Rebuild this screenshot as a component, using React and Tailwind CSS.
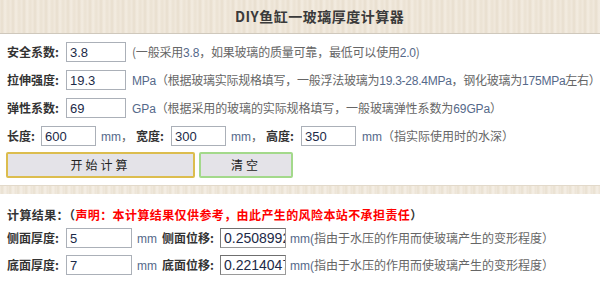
import React from 'react'

const cjk = "font-['Noto_Sans_CJK_SC','Liberation_Sans',sans-serif]"
const latin = "font-['Liberation_Sans','Noto_Sans_CJK_SC',sans-serif]"

// 输入框：浅灰蓝边框
function Field({ value, w = 'w-[60px]', dark = false }) {
  return (
    <input
      readOnly
      value={value}
      className={`${w} h-[20px] shrink-0 bg-white pl-[3px] pr-0 text-[#1c2a48] font-['Liberation_Sans',sans-serif] outline-none border ${
        dark ? 'text-[14px] border-[#9a9a9a] border-t-[#6f6f6f] border-l-[#7a7a7a]' : 'text-[13px] border-[#abb0b8]'
      }`}
    />
  )
}

function Label({ children, w }) {
  return <span className={`${w} shrink-0 text-[12px] font-bold text-[#333] ${cjk}`}>{children}</span>
}

const N = ({ children }) => <span className={`text-[#55698a] ${latin}`}>{children}</span>

export default function App() {
  return (
    <div className={`w-[600px] h-[285px] overflow-hidden bg-white text-[12px] text-[#666] ${cjk}`}>
      <div className="h-[34px] border-b border-[#cfc8bc] bg-[repeating-linear-gradient(90deg,#efe7da_0px,#e8dece_2px,#f3ece1_5px,#ebe2d3_8px,#f1e9dd_11px)] pl-[235px] pt-[6px]">
        <span className="text-[14px] font-bold text-[#3a3a3a] tracking-[0.5px]">DIY鱼缸一玻璃厚度计算器</span>
      </div>

      <div className="pl-[7px] pt-[8px]">
        <div className="flex h-[20px] items-center">
          <Label w="w-[59px]">安全系数:</Label>
          <Field value="3.8" />
          <span className="pl-[6px] whitespace-nowrap tracking-[-0.2px]">(一般采用<N>3.8</N>，如果玻璃的质量可靠，最低可以使用<N>2.0</N>)</span>
        </div>
        <div className="mt-[8px] flex h-[20px] items-center">
          <Label w="w-[59px]">拉伸强度:</Label>
          <Field value="19.3" />
          <span className="pl-[6px] whitespace-nowrap tracking-[-0.25px]"><N>MPa</N>（根据玻璃实际规格填写，一般浮法玻璃为<N>19.3-28.4MPa</N>，钢化玻璃为<N>175MPa</N>左右）</span>
        </div>
        <div className="mt-[8px] flex h-[20px] items-center">
          <Label w="w-[59px]">弹性系数:</Label>
          <Field value="69" />
          <span className="pl-[6px] whitespace-nowrap tracking-[-0.1px]"><N>GPa</N>（根据采用的玻璃的实际规格填写，一般玻璃弹性系数为<N>69GPa</N>）</span>
        </div>
        <div className="mt-[8px] flex h-[20px] items-center whitespace-nowrap">
          <Label w="w-[34px]">长度:</Label>
          <Field value="600" w="w-[55px]" />
          <span className="w-[40px] shrink-0 pl-[5px]"><N>mm</N>，</span>
          <Label w="w-[35px]">宽度:</Label>
          <Field value="300" w="w-[55px]" />
          <span className="w-[40px] shrink-0 pl-[5px]"><N>mm</N>，</span>
          <Label w="w-[35px]">高度:</Label>
          <Field value="350" w="w-[55px]" />
          <span className="pl-[6px]"><N>mm</N>（指实际使用时的水深）</span>
        </div>
        <div className="mt-[6px] flex h-[26px] gap-[4px]">
          <button className="ml-[-1px] w-[189px] rounded-[2px] border-2 border-[#dcbd4e] bg-[#e4e3e8] text-[12px] tracking-[3px] text-[#222]">
            开始计算
          </button>
          <button className="w-[94px] rounded-[2px] border-2 border-[#a3d98b] bg-[#e4e3e8] text-[12px] tracking-[3px] text-[#222]">
            清空
          </button>
        </div>
      </div>

      <div className="mt-[7px] h-[9px] border-t border-[#e2d9ca] bg-[repeating-linear-gradient(90deg,#f1eadf_0px,#e9e0d0_2px,#f5efe6_5px,#ece3d5_8px)]" />

      <div className="pl-[7px]">
        <div className="mt-[14px] flex h-[14px] items-center whitespace-nowrap font-bold tracking-[0.4px]">
          <span className="text-[#333]">计算结果：（</span>
          <span className="text-[#ff0000]">声明：本计算结果仅供参考，由此产生的风险本站不承担责任</span>
          <span className="text-[#333]">）</span>
        </div>
        <div className="mt-[6px] flex h-[20px] items-center whitespace-nowrap">
          <Label w="w-[59px]">侧面厚度:</Label>
          <Field value="5" w="w-[66px]" />
          <span className="w-[30px] shrink-0 pl-[5px]"><N>mm</N></span>
          <Label w="w-[58px]">侧面位移:</Label>
          <Field value="0.25089928" w="w-[66px]" dark />
          <span className="pl-[4px]"><N>mm(</N>指由于水压的作用而使玻璃产生的变形程度）</span>
        </div>
        <div className="mt-[7px] flex h-[20px] items-center whitespace-nowrap">
          <Label w="w-[59px]">底面厚度:</Label>
          <Field value="7" w="w-[66px]" />
          <span className="w-[30px] shrink-0 pl-[5px]"><N>mm</N></span>
          <Label w="w-[58px]">底面位移:</Label>
          <Field value="0.22140476" w="w-[66px]" dark />
          <span className="pl-[4px]"><N>mm(</N>指由于水压的作用而使玻璃产生的变形程度）</span>
        </div>
      </div>
    </div>
  )
}
